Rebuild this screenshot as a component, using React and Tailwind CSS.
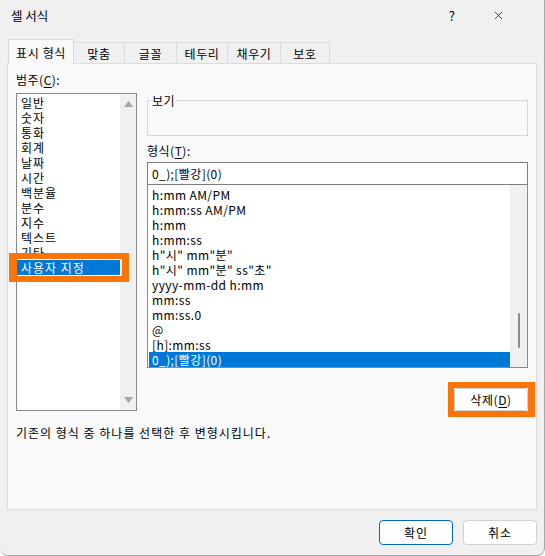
import { X } from 'lucide-react';

const categories = ['일반', '숫자', '통화', '회계', '날짜', '시간', '백분율', '분수', '지수', '텍스트', '기타', '사용자 지정'];

const formats = [
  'h:mm AM/PM',
  'h:mm:ss AM/PM',
  'h:mm',
  'h:mm:ss',
  'h"시" mm"분"',
  'h"시" mm"분" ss"초"',
  'yyyy-mm-dd h:mm',
  'mm:ss',
  'mm:ss.0',
  '@',
  '[h]:mm:ss',
  '0_);[빨강](0)',
];

const tabs = [
  { label: '맞춤', w: 'w-[51px]' },
  { label: '글꼴', w: 'w-[52px]' },
  { label: '테두리', w: 'w-[51px]' },
  { label: '채우기', w: 'w-[53px]' },
  { label: '보호', w: 'w-[49px]' },
];

function Tri({ down }) {
  return (
    <svg width="9" height="6" viewBox="0 0 9 6" className="block">
      <path d={down ? 'M0 0h9L4.5 6z' : 'M0 6h9L4.5 0z'} fill="#a3a3a3" />
    </svg>
  );
}

export default function App() {
  return (
    <div className="relative h-[556px] w-[545px] overflow-hidden rounded-b-lg border-r border-b border-[#a8a8a8] bg-[#f0f0f0] font-['Noto_Sans_CJK_KR','Noto_Sans',sans-serif] text-[12px] leading-[15px] text-black">
      {/* title bar */}
      <div className="flex h-[31px] items-center pl-[11px] pr-[39px]">
        <span className="text-[12.5px]">셀 서식</span>
        <span className="ml-auto text-[13px]">?</span>
        <X className="ml-[37px] h-[13px] w-[13px]" strokeWidth={1.3} />
      </div>

      {/* tabs */}
      <div className="mt-[8px] flex h-[24px] items-end pl-[8px] tracking-[0.6px]">
        <div className="relative z-10 -mb-px flex h-[25px] w-[66px] items-center justify-center border border-b-0 border-[#d9d9d9] bg-[#f9f9f9]">
          표시 형식
        </div>
        {tabs.map((t) => (
          <div
            key={t.label}
            className={`flex h-[21px] items-center justify-center border-t border-r border-[#dadada] bg-[#f0f0f0] ${t.w}`}
          >
            {t.label}
          </div>
        ))}
      </div>

      {/* panel */}
      <div className="ml-[7px] h-[447px] w-[530px] border border-[#dcdcdc] bg-[#f9f9f9] px-[8px] pt-[8px]">
        <div className="tracking-[0.5px]">
          범주(<span className="underline underline-offset-2">C</span>):
        </div>
        <div className="mt-[6px] flex gap-[10px]">
          {/* category list */}
          <div className="relative flex h-[318px] w-[121px] border border-[#8a8a8a] bg-white">
            <div className="flex-1 pt-[1px] tracking-[1px]">
              {categories.map((c) => (
                <div
                  key={c}
                  className={`h-[15px] pl-[4px] ${c === '사용자 지정' ? 'bg-[#0078d7] text-white' : ''}`}
                >
                  {c}
                </div>
              ))}
            </div>
            <div className="flex w-[16px] flex-col items-center justify-between bg-[#f0f0f0] py-[7px]">
              <Tri />
              <Tri down />
            </div>
            <div className="pointer-events-none absolute top-[159px] left-[-8px] h-[29px] w-[120px] border-y-[6px] border-r-[7px] border-l-[8px] border-[#fa7408]" />
          </div>

          {/* right column */}
          <div className="flex w-[381px] flex-col">
            <fieldset className="h-[43px] border border-[#d6d6d6] px-[3px]">
              <legend className="px-[1px] tracking-[0.5px]">보기</legend>
            </fieldset>
            <div className="mt-[7px] tracking-[0.5px]">
              형식(<span className="underline underline-offset-2">T</span>):
            </div>
            <div className="mt-[4px] flex h-[23px] items-center border border-[#7d7d7d] bg-white pl-[4px] tracking-[0.4px]">
              0_);[빨강](0)
            </div>
            <div className="flex h-[183px] border border-t-0 border-[#8a8a8a] bg-white">
              <div className="flex-1 pt-[2px] pl-[1px] tracking-[0.4px]">
                {formats.map((f, i) => (
                  <div
                    key={f}
                    className={`h-[15px] pl-[3px] ${i === formats.length - 1 ? 'bg-[#0078d7] text-white' : ''}`}
                  >
                    {f}
                  </div>
                ))}
              </div>
              <div className="flex w-[17px] justify-center bg-[#f0f0f0] pt-[128px]">
                <div className="h-[35px] w-[2px] rounded bg-[#8a8a8a]" />
              </div>
            </div>
            <div className="relative mt-[20px] flex justify-end">
              <button className="flex h-[23px] w-[74px] items-center justify-center rounded-[3px] border border-[#d0d0d0] bg-[#fdfdfd] tracking-[0.6px]">
                삭제(<span className="underline underline-offset-2">D</span>)
              </button>
              <div className="pointer-events-none absolute top-[-6px] right-[-7px] h-[35px] w-[87px] border-[6px] border-r-[7px] border-[#fa7408]" />
            </div>
          </div>
        </div>
        <div className="mt-[14px] tracking-[1px]">기존의 형식 중 하나를 선택한 후 변형시킵니다.</div>
      </div>

      {/* bottom buttons */}
      <div className="mt-[10px] flex justify-end gap-[10px] pr-[7px] tracking-[1px]">
        <button className="flex h-[25px] w-[74px] items-center justify-center rounded-[4px] border border-[#0067c0] bg-[#fdfdfd]">
          확인
        </button>
        <button className="flex h-[25px] w-[74px] items-center justify-center rounded-[4px] border border-[#d0d0d0] bg-[#fdfdfd]">
          취소
        </button>
      </div>
    </div>
  );
}
